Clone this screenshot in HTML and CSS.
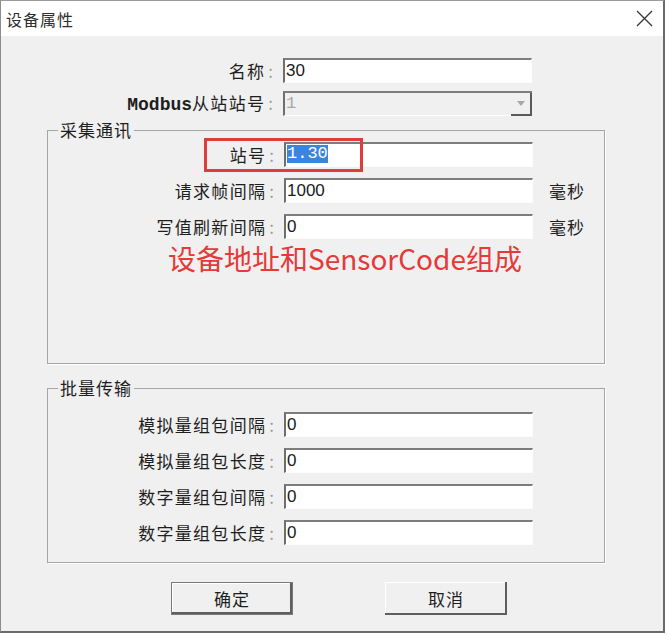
FILE: index.html
```html
<!DOCTYPE html>
<html lang="zh-CN">
<head>
  <meta charset="UTF-8" />
  <title>设备属性</title>
  <link rel="stylesheet" href="styles.css">
</head>
<body>
  <div class="window">
    <div class="titlebar">
      <span class="title">设备属性</span>
      <svg class="close" width="17" height="17" viewBox="0 0 17 17">
        <path d="M1 1 L16 16 M16 1 L1 16" stroke="#3a3a3a" stroke-width="1.4" fill="none" />
      </svg>
    </div>

    <div class="dialog">
      <div class="row">
        <label class="label">名称<span class="colon">:</span></label>
        <div class="edit">30</div>
      </div>
      <div class="row row-next">
        <label class="label"><span class="mono">Modbus</span>从站站号<span class="colon">:</span></label>
        <div class="edit combo">
          <span class="combo-value">1</span>
          <span class="combo-btn">
            <svg width="8" height="5" viewBox="0 0 8 5"><path d="M0 0 H8 L4 5 Z" fill="#a8a8a8" /></svg>
          </span>
        </div>
      </div>

      <fieldset class="group group-comm">
        <legend>采集通讯</legend>
        <div class="row row-station">
          <label class="label">站号<span class="colon">:</span></label>
          <div class="edit"><span class="selected">1.30</span></div>
          <div class="mark"></div>
        </div>
        <div class="row row-next">
          <label class="label">请求帧间隔<span class="colon">:</span></label>
          <div class="edit">1000</div>
          <span class="unit">毫秒</span>
        </div>
        <div class="row row-next">
          <label class="label">写值刷新间隔<span class="colon">:</span></label>
          <div class="edit">0</div>
          <span class="unit">毫秒</span>
        </div>
        <p class="note">设备地址和SensorCode组成</p>
      </fieldset>

      <fieldset class="group group-batch">
        <legend>批量传输</legend>
        <div class="row">
          <label class="label">模拟量组包间隔<span class="colon">:</span></label>
          <div class="edit">0</div>
        </div>
        <div class="row row-next">
          <label class="label">模拟量组包长度<span class="colon">:</span></label>
          <div class="edit">0</div>
        </div>
        <div class="row row-next">
          <label class="label">数字量组包间隔<span class="colon">:</span></label>
          <div class="edit">0</div>
        </div>
        <div class="row row-next">
          <label class="label">数字量组包长度<span class="colon">:</span></label>
          <div class="edit">0</div>
        </div>
      </fieldset>

      <div class="buttons">
        <button type="button" class="btn btn-default">确定</button>
        <button type="button" class="btn">取消</button>
      </div>
    </div>
  </div>
</body>
</html>
```

FILE: styles.css
```css
body {
  margin: 0;
  background-color: #ffffff;
  font-family: 'Noto Sans CJK SC', sans-serif;
  color: #1e1e1e;
}
.window {
  width: 665px;
  height: 633px;
  box-sizing: border-box;
  border-top: 1px solid #9a9a9a;
  border-left: 1px solid #8c8c8c;
  border-right: 2px solid #6a6a6a;
  border-bottom: 2px solid #6a6a6a;
  background-color: #f0f0f0;
}
.titlebar {
  height: 35px;
  background-color: #ffffff;
  display: flex;
  align-items: center;
  justify-content: space-between;
  padding: 0 10px 0 5px;
}
.title {
  font-size: 16px;
  letter-spacing: 1px;
  color: #2e2e2e;
}
.dialog {
  padding-top: 22px;
}
.row {
  display: flex;
  align-items: center;
  height: 25px;
  position: relative;
}
.row-next {
  margin-top: 8px;
}
.label {
  width: 272px;
  padding-right: 8px;
  margin-right: 2px;
  text-align: right;
  font-size: 17px;
  line-height: 25px;
  letter-spacing: 1.3px;
  white-space: nowrap;
}
.colon {
  color: #9a9a9a;
  margin-left: 3px;
  letter-spacing: 0;
}
.mono {
  font-family: 'Liberation Mono', monospace;
  font-size: 18px;
  font-weight: bold;
  letter-spacing: 0;
}
.edit {
  width: 249px;
  height: 25px;
  box-sizing: border-box;
  background-color: #ffffff;
  border-top: 2px solid #7d7d7d;
  border-left: 2px solid #6f6f6f;
  border-right: 1px solid #fcfcfc;
  border-bottom: 1px solid #fcfcfc;
  padding-left: 1px;
  font-family: 'Liberation Sans', sans-serif;
  font-size: 17px;
  line-height: 22px;
  color: #1a1a1a;
}
.combo {
  display: flex;
  background-color: #f0f0f0;
  border-right: 0;
}
.combo-value {
  flex: 1;
  font-family: 'Liberation Mono', monospace;
  color: #a8a8a8;
}
.combo-btn {
  width: 21px;
  box-sizing: border-box;
  border-right: 2px solid #5a5a5a;
  border-bottom: 2px solid #5a5a5a;
  margin-bottom: -1px;
  display: flex;
  align-items: center;
  justify-content: center;
}
.selected {
  display: inline-block;
  background-color: #3a86dc;
  color: #ffffff;
  font-family: 'Liberation Mono', monospace;
  font-size: 17px;
  line-height: 18px;
  margin-top: 1px;
  vertical-align: top;
}
.unit {
  margin-left: 16px;
  font-size: 17px;
  letter-spacing: 1px;
}

/* group boxes */
.group {
  margin: 0 0 0 46px;
  padding: 0;
  width: 558px;
  box-sizing: border-box;
  border: 1px solid #a5a5a5;
  box-shadow: 1px 1px 0 #ffffff;
  min-width: 0;
}
.group legend {
  margin-left: 10px;
  padding: 0 2px;
  font-size: 17px;
  line-height: 16px;
  letter-spacing: 1px;
}
.group .label {
  width: 226px;
}
.group .row-next {
  margin-top: 11px;
}
.group-comm {
  margin-top: 6px;
  height: 242px;
  padding-top: 4px;
}
.group-batch {
  margin-top: 16px;
  height: 183px;
  padding-top: 16px;
}
.mark {
  position: absolute;
  left: 156px;
  top: -4px;
  width: 159px;
  height: 34px;
  box-sizing: border-box;
  border: 3px solid #e03c3c;
}
.note {
  margin: 4px 0 0 120px;
  font-size: 28px;
  line-height: 30px;
  color: #e53a3a;
}

/* buttons */
.buttons {
  display: flex;
  gap: 92px;
  margin-top: 19px;
  padding-left: 170px;
}
.btn {
  width: 122px;
  height: 33px;
  border: 0;
  background-color: #f0f0f0;
  font-family: 'Noto Sans CJK SC', sans-serif;
  font-size: 17px;
  letter-spacing: 1px;
  color: #1e1e1e;
  box-shadow: inset -2px -2px 0 #5e5e5e, inset 1px 1px 0 #ffffff;
  padding: 0;
}
.btn-default {
  border: 1px solid #7a7a7a;
}
```
